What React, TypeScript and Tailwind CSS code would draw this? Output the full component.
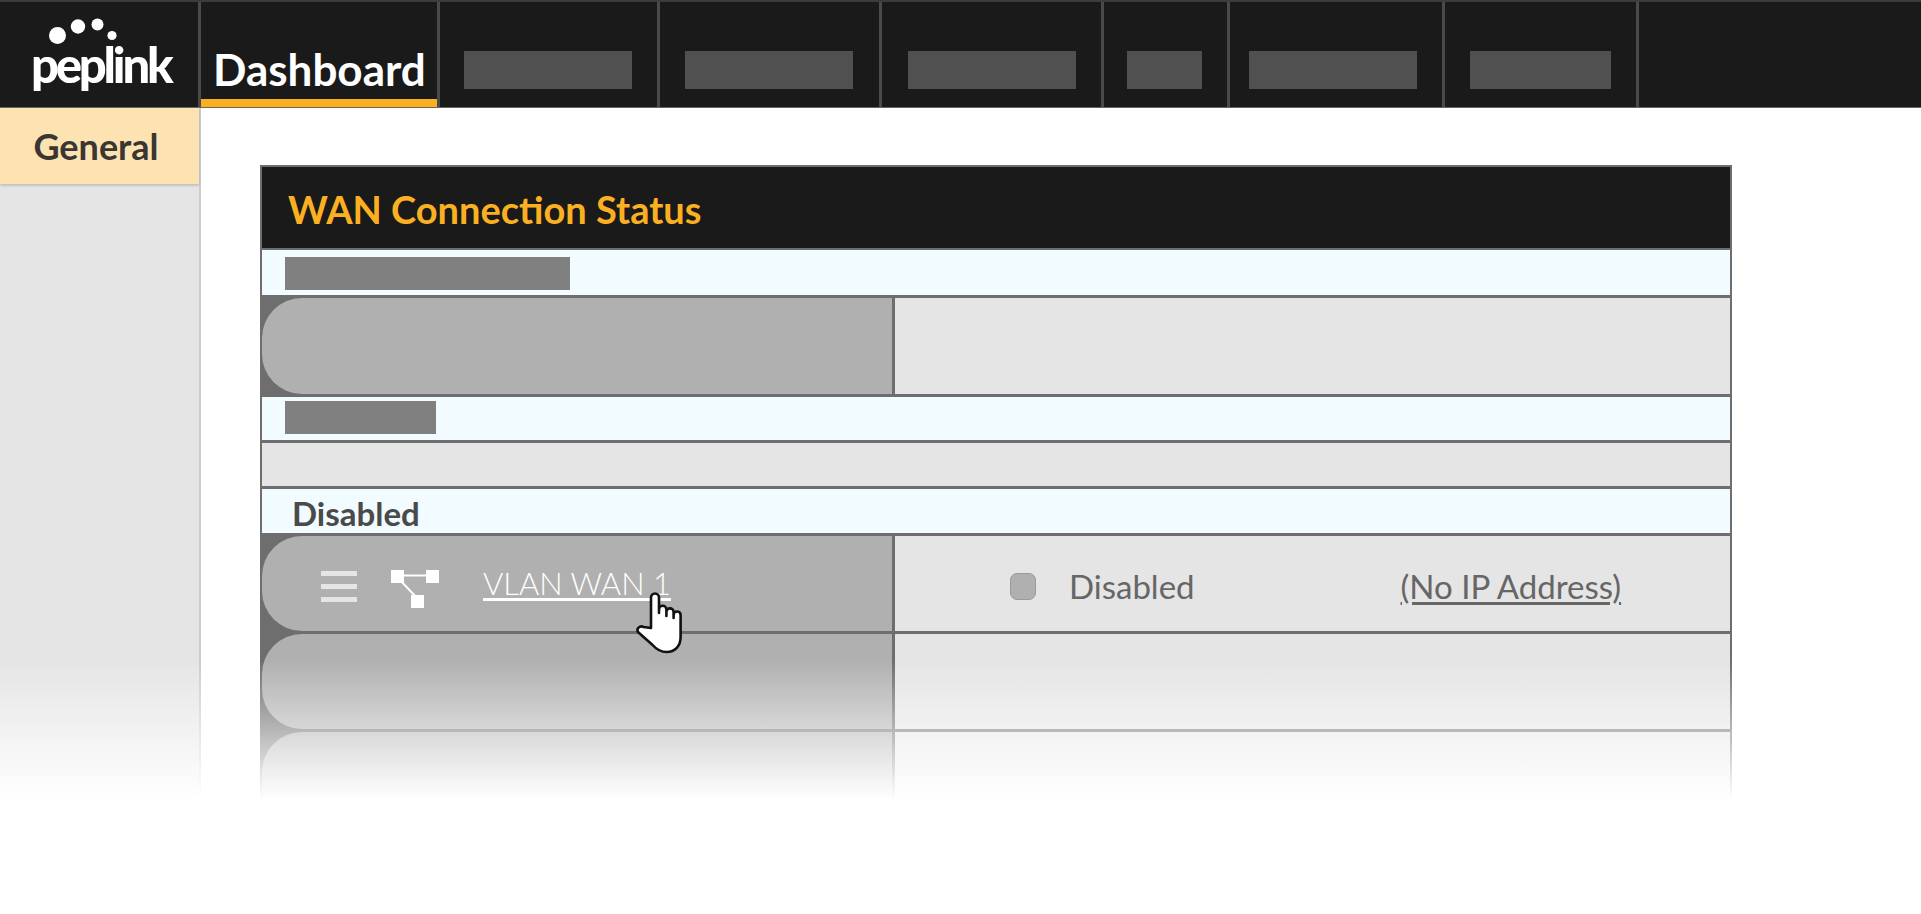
const tabs = [
  { cell: 'w-[220px] pl-[24px]', bar: 'w-[168px]' },
  { cell: 'w-[222px] pl-[25px]', bar: 'w-[168px]' },
  { cell: 'w-[222px] pl-[26px]', bar: 'w-[168px]' },
  { cell: 'w-[126px] pl-[23px]', bar: 'w-[75px]' },
  { cell: 'w-[215px] pl-[19px]', bar: 'w-[168px]' },
  { cell: 'w-[194px] pl-[25px]', bar: 'w-[141px]' },
]

function PeplinkLogo() {
  return (
    <div className="relative h-full w-full">
      <svg className="absolute left-[40px] top-[13px]" width="80" height="32" viewBox="0 0 80 32" fill="#fff">
        <circle cx="17.5" cy="20.5" r="8.5" />
        <circle cx="38" cy="11.5" r="7.2" />
        <circle cx="57.5" cy="9.5" r="6" />
        <circle cx="72" cy="20.5" r="4.6" />
      </svg>
      <span className="absolute left-[31px] top-[34px] text-[49px] leading-[56px] font-black tracking-[-3.2px] text-white">
        peplink
      </span>
    </div>
  )
}

function NetworkIcon() {
  return (
    <svg width="49" height="39" viewBox="0 0 49 39" fill="#fff" stroke="none">
      <rect x="0" y="0" width="13" height="13" />
      <rect x="35" y="0" width="13" height="13" />
      <rect x="20" y="25" width="13" height="13" />
      <path d="M10 5.500h28" stroke="#fff" strokeWidth="2" />
      <path d="M8 9l18 19" stroke="#fff" strokeWidth="2" />
    </svg>
  )
}

function HandCursor() {
  return (
    <svg
      className="absolute left-[635px] top-[591px]"
      width="50"
      height="64"
      viewBox="0 0 50 64"
      fill="#fff"
      stroke="#111"
      strokeWidth="2.6"
      strokeLinejoin="round"
      strokeLinecap="round"
    >
      <path d="M16 37V6.500a4 4 0 0 1 8 0V22v-3.500a3.700 3.700 0 0 1 7.400 0V25v-4a3.600 3.600 0 0 1 7.200 0v6v-3a3.500 3.500 0 0 1 7 0V46c0 9-5.500 15-14 15c-7 0-10.500-3-14-7L3.500 41.500c-3-3.500 1.500-7.500 5-5.500z" />
    </svg>
  )
}

function GreyRow({ height, children, right }: { height: string; children?: React.ReactNode; right?: React.ReactNode }) {
  return (
    <div className={`flex ${height} border-b-[3px] border-[#6e6e6e]`}>
      <div className="w-[630px] bg-[#6e6e6e]">
        <div className="flex h-full items-center rounded-l-[40px] bg-[#b0b0b0]">{children}</div>
      </div>
      <div className="flex flex-1 items-center border-l-[3px] border-[#6e6e6e] bg-[#e5e5e5]">{right}</div>
    </div>
  )
}

function BlueRow({ height, children }: { height: string; children?: React.ReactNode }) {
  return <div className={`flex ${height} items-start border-b-[3px] border-[#6e6e6e] bg-[#f2fbff]`}>{children}</div>
}

export default function App() {
  return (
    <div className="relative h-[914px] overflow-hidden bg-white font-['Lato',sans-serif]">
      <header className="flex h-[108px] border-t-[2px] border-b border-[#3c3c3c] border-b-[#666666] bg-[#1a1a1a]">
        <div className="w-[201px] border-r-[3px] border-[#4a4a4a]">
          <PeplinkLogo />
        </div>
        <div className="w-[239px] border-r-[3px] border-[#4a4a4a]">
          <div className="flex h-full items-center border-b-[8px] border-[#fbb022] pt-[36px] pl-[12px] text-[44px] leading-none font-bold text-white">
            Dashboard
          </div>
        </div>
        {tabs.map((tab, i) => (
          <div key={i} className={`${tab.cell} border-r-[3px] border-[#4a4a4a] pt-[49px]`}>
            <div className={`${tab.bar} h-[38px] bg-[#505050]`} />
          </div>
        ))}
      </header>

      <div className="flex h-[692px] overflow-hidden">
        <aside className="w-[201px] border-r-[2px] border-[#cccccc] bg-[#e5e5e5]">
          <div className="flex h-[76px] items-center justify-center bg-[#fde3b1] pr-[7px] text-[36px] font-bold text-[#3a3632] shadow-[0_2px_2px_rgba(0,0,0,0.15)]">
            General
          </div>
        </aside>

        <main className="pt-[57px] pl-[59px]">
          <div className="w-[1472px] border-x-[2px] border-t-[2px] border-[#6e6e6e]">
            <div className="flex h-[83px] items-center border-b-[2px] border-[#6e6e6e] bg-[#1a1a1a] pt-[4px] pl-[26px] text-[38px] font-bold text-[#fbb022]">
              WAN Connection Status
            </div>
            <BlueRow height="h-[48px]">
              <div className="mt-[7px] ml-[23px] h-[33px] w-[285px] bg-[#808080]" />
            </BlueRow>
            <GreyRow height="h-[99px]" />
            <BlueRow height="h-[46px]">
              <div className="mt-[4px] ml-[23px] h-[33px] w-[151px] bg-[#808080]" />
            </BlueRow>
            <div className="h-[46px] border-b-[3px] border-[#6e6e6e] bg-[#e5e5e5]" />
            <BlueRow height="h-[47px]">
              <span className="ml-[30px] text-[33px] leading-[48px] font-bold text-[#4a4a4a]">Disabled</span>
            </BlueRow>
            <GreyRow
              height="h-[98px]"
              right={
                <>
                  <span className="mt-[6px] ml-[115px] h-[27px] w-[26px] rounded-[7px] border border-[#9a9a9a] bg-[#b0b0b0]" />
                  <span className="mt-[6px] ml-[33px] text-[33px] text-[#666666]">Disabled</span>
                  <span className="mt-[6px] ml-[206px] text-[33px] text-[#666666] underline underline-offset-[3px]">
                    (No IP Address)
                  </span>
                </>
              }
            >
              <div className="mt-[6px] ml-[59px] flex w-[36px] flex-col gap-[8px]">
                <span className="h-[5px] bg-[#e5e5e5]" />
                <span className="h-[5px] bg-[#e5e5e5]" />
                <span className="h-[5px] bg-[#e5e5e5]" />
              </div>
              <div className="mt-[12px] ml-[34px]">
                <NetworkIcon />
              </div>
              <a className="ml-[43px] text-[31px] font-light text-white underline underline-offset-[3px]">VLAN WAN 1</a>
            </GreyRow>
            <GreyRow height="h-[98px]" />
            <GreyRow height="h-[98px]" />
          </div>
        </main>
      </div>

      <HandCursor />
      <div className="absolute inset-x-0 top-[660px] h-[140px] bg-linear-to-b from-white/0 to-white" />
    </div>
  )
}
